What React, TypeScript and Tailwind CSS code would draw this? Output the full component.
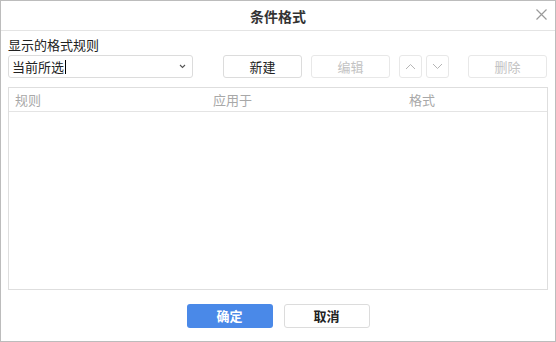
import React from "react";

const font = { fontFamily: '"Noto Sans CJK SC", "Noto Sans", sans-serif' };

function Btn({ children, disabled, className = "" }: { children: React.ReactNode; disabled?: boolean; className?: string }) {
  return (
    <div
      className={`h-[23px] flex items-center justify-center rounded-[3px] border border-[#dcdcdc] bg-white text-[13px] ${disabled ? "text-[#c3c3c3] border-[#e8e8e8]" : "text-[#222]"} ${className}`}
    >
      {children}
    </div>
  );
}

export default function App() {
  return (
    <div style={font} className="w-[556px] h-[342px] border border-[#bcbcbc] bg-white flex flex-col text-[#222]">
      <div className="h-[30px] shrink-0 border-b border-[#e4e4e4] flex items-center justify-center relative">
        <span className="text-[14px] font-bold text-[#333] leading-none">条件格式</span>
        <svg className="absolute right-[7px] top-[7px]" width="13" height="13" viewBox="0 0 13 13">
          <path d="M1.5 1.5 L11.5 11.5 M11.5 1.5 L1.5 11.5" stroke="#9a9a9a" strokeWidth="1.2" fill="none" />
        </svg>
      </div>
      <div className="flex-1 flex flex-col px-[7px] pt-[6px]">
        <div className="text-[13px] leading-[16px] h-[16px] text-[#222]">显示的格式规则</div>
        <div className="mt-[2px] flex items-center">
          <div className="w-[185px] h-[23px] rounded-[3px] border border-[#dcdcdc] flex items-center pl-[3px] pr-[6px]">
            <span className="text-[13px] text-[#222] leading-none">当前所选</span>
            <span className="w-px h-[14px] bg-black ml-[1px]" />
            <div className="flex-1" />
            <svg width="7" height="5" viewBox="0 0 7 5">
              <path d="M1 1 L3.5 3.5 L6 1" stroke="#555" strokeWidth="1.1" fill="none" />
            </svg>
          </div>
          <Btn className="w-[79px] ml-[30px]">新建</Btn>
          <Btn disabled className="w-[79px] ml-[9px]">编辑</Btn>
          <Btn disabled className="w-[23px] ml-[9px]">
            <svg width="11" height="7" viewBox="0 0 11 7">
              <path d="M1 6 L5.5 1.5 L10 6" stroke="#b5b5b5" strokeWidth="1" fill="none" />
            </svg>
          </Btn>
          <Btn disabled className="w-[23px] ml-[4px]">
            <svg width="11" height="7" viewBox="0 0 11 7">
              <path d="M1 1 L5.5 5.5 L10 1" stroke="#b5b5b5" strokeWidth="1" fill="none" />
            </svg>
          </Btn>
          <Btn disabled className="w-[79px] ml-[19px]">删除</Btn>
        </div>
        <div className="mt-[9px] h-[203px] border border-[#dedede] flex flex-col">
          <div className="h-[24px] border-b border-[#e4e4e4] flex items-center text-[13px] text-[#a8a8a8]">
            <span className="w-[204px] pl-[6px]">规则</span>
            <span className="w-[196px]">应用于</span>
            <span>格式</span>
          </div>
        </div>
        <div className="mt-[14px] flex justify-center gap-[11px] pr-0">
          <div className="w-[86px] h-[24px] rounded-[3px] bg-[#4a89e8] text-white text-[13px] font-bold flex items-center justify-center">确定</div>
          <div className="w-[86px] h-[24px] rounded-[3px] border border-[#dcdcdc] bg-white text-[#222] text-[13px] font-bold flex items-center justify-center">取消</div>
        </div>
      </div>
    </div>
  );
}
